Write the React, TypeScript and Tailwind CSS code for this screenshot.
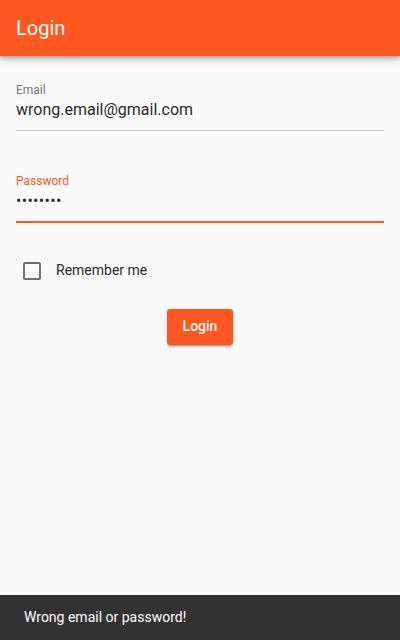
import React from "react";

export default function App() {
  return (
    <div
      className="relative w-[400px] h-[640px] bg-[#fafafa] overflow-hidden flex flex-col"
      style={{ fontFamily: "Roboto, 'Liberation Sans', sans-serif" }}
    >
      <header className="relative z-10 h-[56px] shrink-0 bg-[#ff5722] flex items-center px-4 shadow-[0_2px_4px_-1px_rgba(0,0,0,0.2),0_4px_5px_0_rgba(0,0,0,0.14),0_1px_10px_0_rgba(0,0,0,0.12)]">
        <h1 className="text-white text-[20px] font-normal leading-none">Login</h1>
      </header>

      <main className="flex-1 flex flex-col px-4">
        <div className="mt-[26px]">
          <div className="text-[12px] leading-[16px] text-[#757575]">Email</div>
          <div className="mt-[-0.5px] text-[16px] leading-[24px] text-[#2a2a2a]">wrong.email@gmail.com</div>
          <div className="mt-[8px] h-[1.5px] bg-[#c4c4c4]" />
        </div>

        <div className="mt-[42px]">
          <div className="text-[12px] leading-[16px] text-[#ff5722]">Password</div>
          <div className="mt-[-0.5px] text-[16px] leading-[24px] text-[#2a2a2a] tracking-[0.3px]">••••••••</div>
          <div className="mt-[8px] h-[2px] bg-[#ff5722]" />
        </div>

        <div className="mt-[39px] flex items-center h-[18px]">
          <div className="ml-[7px] w-[18px] h-[18px] border-2 border-[#6f6f6f] rounded-[2px]" />
          <span className="ml-[15px] text-[14px] text-[#2a2a2a]">Remember me</span>
        </div>

        <div className="mt-[29px] flex justify-center">
          <button className="h-[36px] px-4 rounded-[3px] bg-[#ff5722] text-white text-[14px] font-medium shadow-[0_3px_1px_-2px_rgba(0,0,0,0.2),0_2px_2px_0_rgba(0,0,0,0.14),0_1px_5px_0_rgba(0,0,0,0.12)]">
            Login
          </button>
        </div>
      </main>

      <div className="h-[45px] shrink-0 bg-[#323232] flex items-center px-6">
        <span className="text-white text-[14px]">Wrong email or password!</span>
      </div>
    </div>
  );
}
